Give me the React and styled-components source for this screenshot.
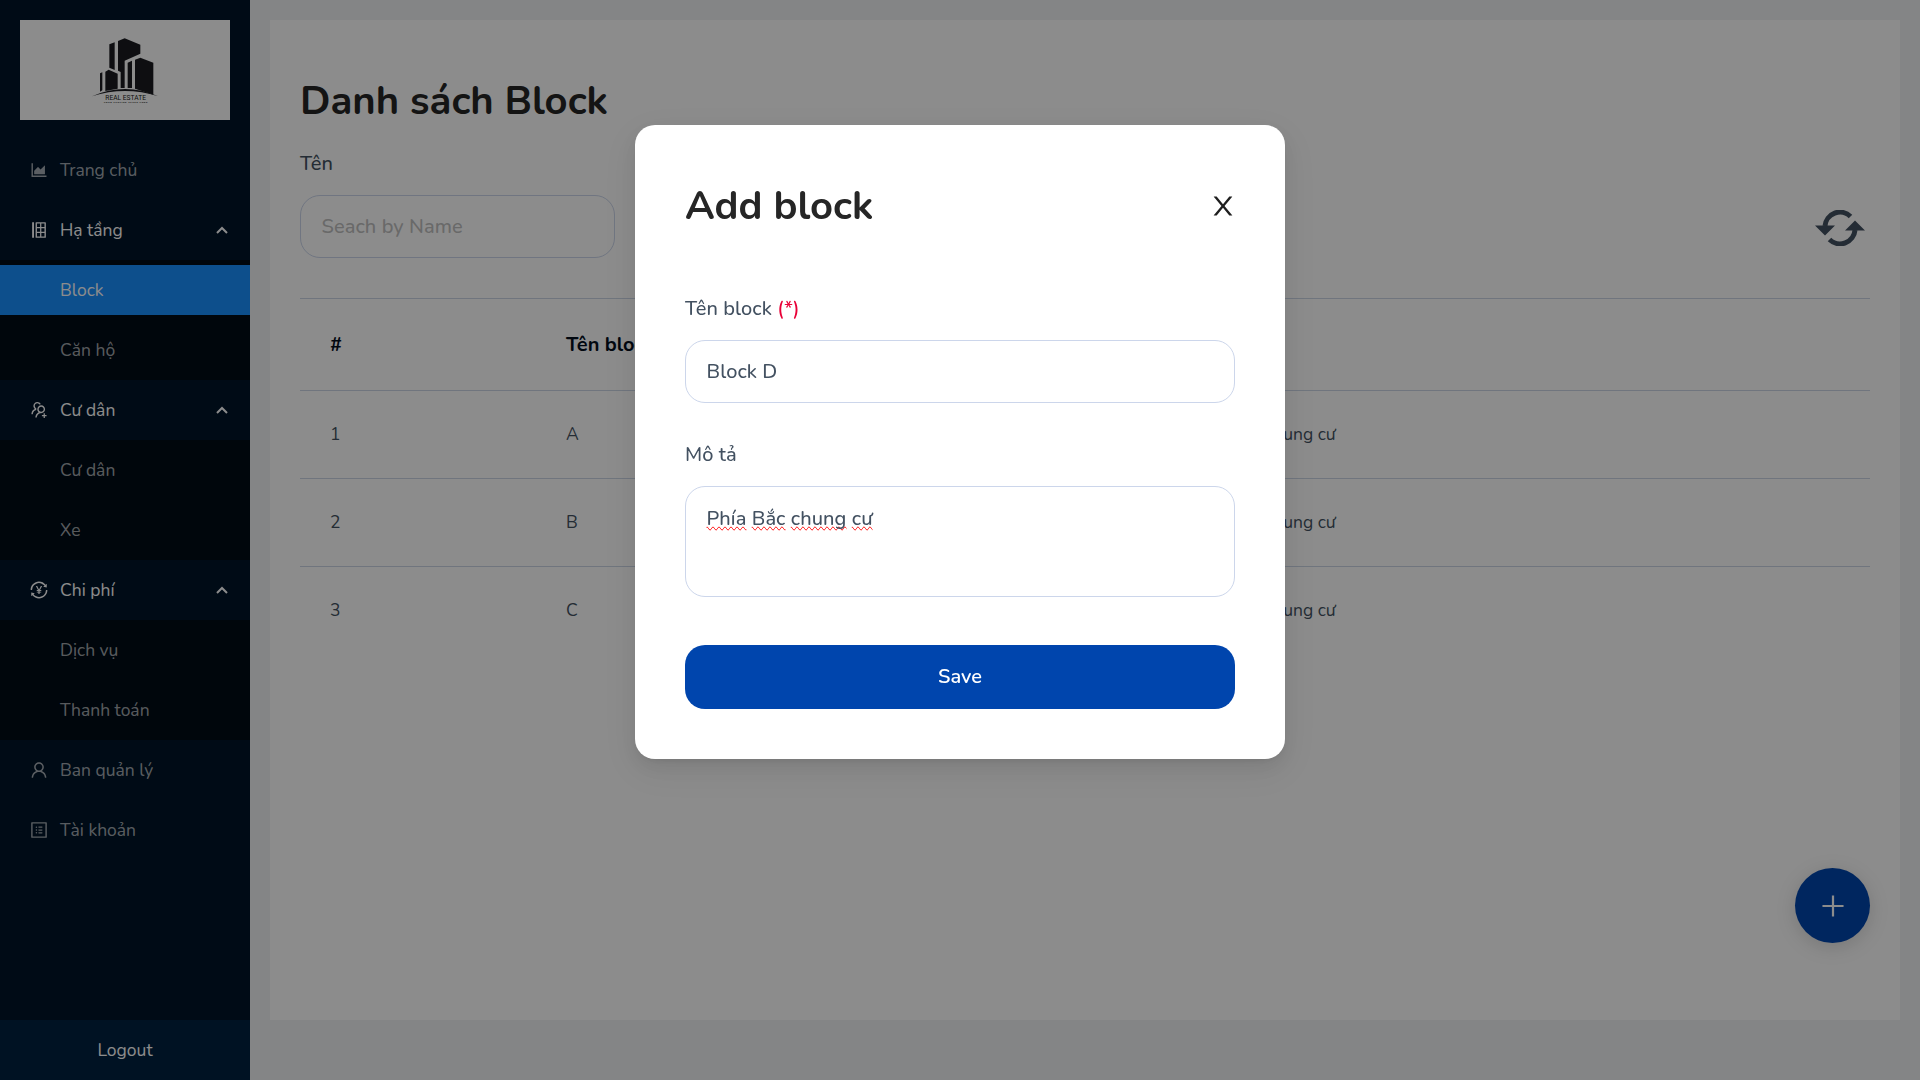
import React from 'react';
import styled, { createGlobalStyle } from 'styled-components';
import {
  AiOutlineAreaChart,
  AiOutlineInsertRowLeft,
  AiOutlineUsergroupAdd,
  AiOutlineTransaction,
  AiOutlineUser,
  AiOutlineProfile,
  AiOutlinePlus,
} from 'react-icons/ai';

const GlobalStyle = createGlobalStyle`
  *, *::before, *::after { box-sizing: border-box; }
  html, body { margin: 0; padding: 0; height: 100%; overflow: hidden; }
  body, input, textarea, button {
    font-family: Nunito, Lato, "Open Sans", sans-serif;
  }
  body { font-size: 17.5px; line-height: 1.5; color: #435161; }
`;

const Layout = styled.div`
  display: flex;
  width: 100vw;
  height: 100vh;
  background: #f0f2f5;
`;

/* ---------- Sidebar ---------- */

const Sidebar = styled.aside`
  display: flex;
  flex-direction: column;
  width: 250px;
  flex: none;
  background: #001529;
`;

const LogoBox = styled.div`
  height: 100px;
  margin: 20px;
  background: #fff;
  display: flex;
  align-items: center;
  justify-content: center;
`;

const Menu = styled.nav`
  display: flex;
  flex-direction: column;
  flex: 1;
`;

const Submenu = styled.div`
  display: flex;
  flex-direction: column;
  background: #000c17;
`;

const MenuItem = styled.div`
  display: flex;
  align-items: center;
  height: 50px;
  margin: 5px 0;
  padding: 0 20px 0 ${(p) => (p.$nested ? 60 : 29)}px;
  font-size: 17.5px;
  white-space: nowrap;
  color: ${(p) => (p.$bright ? '#fff' : 'rgba(255, 255, 255, 0.65)')};
  background: ${(p) => (p.$active ? '#1890ff' : 'transparent')};

  > svg:first-child {
    width: 20px;
    height: 20px;
    margin-right: 11px;
    flex: none;
  }
`;

const Caret = styled.svg`
  width: 12px;
  height: 8px;
  margin-left: auto;
  margin-right: 2px;
`;

const Logout = styled.button`
  height: 60px;
  border: 0;
  background: #002140;
  color: #fff;
  font-size: 17.5px;
`;

/* ---------- Content ---------- */

const Main = styled.main`
  flex: 1;
  padding: 20px 20px 60px;
  display: flex;
`;

const Card = styled.section`
  position: relative;
  flex: 1;
  background: #fff;
  padding: 51px 30px 30px;
`;

const Title = styled.h1`
  margin: 0;
  height: 60px;
  line-height: 60px;
  font-size: 40px;
  font-weight: 700;
  color: #262626;
`;

const FilterRow = styled.div`
  display: flex;
  justify-content: space-between;
  align-items: flex-end;
  height: 127px;
`;

const Field = styled.div`
  display: flex;
  flex-direction: column;
  width: ${(p) => p.$width || '100%'};
`;

const Label = styled.label`
  height: 30px;
  line-height: 30px;
  margin-bottom: 16px;
  font-size: 20px;
  font-weight: 500;
  letter-spacing: 0.08px;
  color: #435161;
`;

const Required = styled.span`
  color: #e90037;
`;

const Input = styled.input`
  height: 63px;
  padding: 0 20.5px;
  border: 1px solid #ccd6eb;
  border-radius: 20px;
  background: transparent;
  font-size: 20px;
  font-weight: 500;
  letter-spacing: 0.08px;
  color: #435161;
  outline: none;
  &::placeholder { color: #bfbfbf; opacity: 1; }
`;

const RefreshIcon = styled.svg`
  width: 50px;
  height: 36px;
  margin: 0 5px 12px 0;
`;

const Table = styled.div`
  margin-top: 40px;
`;

const Row = styled.div`
  display: grid;
  grid-template-columns: 236px 627px 1fr;
  align-items: center;
  height: ${(p) => (p.$head ? 92 : 88)}px;
  border-top: 1px solid #ccd6e6;
  padding-left: 30px;
  font-size: ${(p) => (p.$head ? 20 : 17.5)}px;
  font-weight: ${(p) => (p.$head ? 700 : 400)};
  color: ${(p) => (p.$head ? '#030d1c' : '#435161')};
`;

const AddButton = styled.button`
  position: absolute;
  right: 30px;
  bottom: 77px;
  width: 75px;
  height: 75px;
  display: flex;
  align-items: center;
  justify-content: center;
  padding: 0;
  border: 0;
  border-radius: 50%;
  background: #0045ad;
  color: #fff;
  box-shadow: 0 4px 20px rgba(0, 0, 0, 0.15);
  svg { width: 30px; height: 30px; }
`;

/* ---------- Modal ---------- */

const Mask = styled.div`
  position: fixed;
  inset: 0;
  display: flex;
  justify-content: center;
  align-items: flex-start;
  padding-top: 125px;
  background: rgba(0, 0, 0, 0.45);
`;

const Dialog = styled.div`
  display: flex;
  flex-direction: column;
  width: 650px;
  height: 634px;
  padding: 51px 50px 50px;
  border-radius: 20px;
  background: #fff;
  box-shadow: 0 4px 8px -5px rgba(0, 0, 0, 0.12), 0 8px 20px rgba(0, 0, 0, 0.08),
    0 11px 35px 10px rgba(0, 0, 0, 0.05);
`;

const DialogHeader = styled.header`
  display: flex;
  justify-content: space-between;
  align-items: center;
  height: 60px;
  margin-bottom: 58px;
`;

const CloseIcon = styled.svg`
  width: 30px;
  height: 30px;
  margin-right: -2.5px;
  color: #1f1f1f;
`;

const Form = styled.form`
  display: flex;
  flex-direction: column;
  gap: 37px;
`;

const TextBox = styled.div`
  height: 111px;
  padding: 17px 20.5px;
  border: 1px solid #ccd6eb;
  border-radius: 20px;
  line-height: 30px;
  font-size: 20px;
  font-weight: 500;
  letter-spacing: 0.08px;
  color: #435161;
`;

const Misspelled = styled.span`
  text-decoration: spelling-error;
`;

const SaveButton = styled.button`
  height: 64px;
  margin-top: 11px;
  padding-bottom: 3px;
  border: 0;
  border-radius: 20px;
  background: #0045ad;
  color: #fff;
  font-size: 20px;
  font-weight: 600;
`;

const Logo = () => (
  <svg width="90" height="80" viewBox="0 0 270 240" fill="#1a1b20">
    <path d="M88 43l16-6v83l-16-7z" />
    <path d="M114 33l20-8 47 19v27l-47 21v82h-12v-48l-8-4z" />
    <path d="M143 98l13-6v82h-13z" />
    <path d="M165 89l16-6 39 15v96l-55-18z" />
    <path d="M60 130l7-3v54l-7 4zM76 125l10-6 27 12v45l-37 7z" />
    <path d="M36 199Q85 177 135 177t100 22Q185 183 135 183T36 199z" />
    <text
      x="76"
      y="210"
      fontFamily="Roboto, sans-serif"
      fontSize="21"
      textLength="122"
      lengthAdjust="spacingAndGlyphs"
    >
      REAL ESTATE
    </text>
    <text
      x="71"
      y="220"
      fontFamily="Roboto, sans-serif"
      fontSize="7.500"
      fontWeight="700"
      textLength="131"
    >
      YOUR TAGLINE SPACE HERE
    </text>
  </svg>
);

const CaretUp = () => (
  <Caret viewBox="0 0 12 8">
    <path d="M1 7l5-5 5 5" fill="none" stroke="currentColor" strokeWidth="2" />
  </Caret>
);

const menu = [
  { label: 'Trang chủ', icon: AiOutlineAreaChart },
  { label: 'Hạ tầng', icon: AiOutlineInsertRowLeft, children: ['Block', 'Căn hộ'] },
  { label: 'Cư dân', icon: AiOutlineUsergroupAdd, children: ['Cư dân', 'Xe'] },
  { label: 'Chi phí', icon: AiOutlineTransaction, children: ['Dịch vụ', 'Thanh toán'] },
  { label: 'Ban quản lý', icon: AiOutlineUser },
  { label: 'Tài khoản', icon: AiOutlineProfile },
];

const blocks = [
  { id: 1, name: 'A', note: 'Phía Tây chung cư' },
  { id: 2, name: 'B', note: 'Phía Tây chung cư' },
  { id: 3, name: 'C', note: 'Phía Tây chung cư' },
];

export default function App() {
  return (
    <>
      <GlobalStyle />
      <Layout>
        <Sidebar>
          <LogoBox>
            <Logo />
          </LogoBox>
          <Menu>
            {menu.map(({ label, icon: Icon, children }) => (
              <React.Fragment key={label}>
                <MenuItem $bright={!!children}>
                  <Icon />
                  {label}
                  {children && <CaretUp />}
                </MenuItem>
                {children && (
                  <Submenu>
                    {children.map((name) => (
                      <MenuItem key={name} $nested $active={name === 'Block'} $bright={name === 'Block'}>
                        {name}
                      </MenuItem>
                    ))}
                  </Submenu>
                )}
              </React.Fragment>
            ))}
          </Menu>
          <Logout>Logout</Logout>
        </Sidebar>
        <Main>
          <Card>
            <Title>Danh sách Block</Title>
            <FilterRow>
              <Field $width="315px">
                <Label>Tên</Label>
                <Input placeholder="Seach by Name" />
              </Field>
              <RefreshIcon viewBox="0 0 50 36">
                <g fill="none" stroke="#435161" strokeWidth="5">
                  <path d="M10 16A15 15 0 0 1 35.500 6.500" />
                  <path d="M40 20A15 15 0 0 1 14.500 29.500" />
                </g>
                <path fill="#435161" d="M0 15.500h20L10 25.500zM30 20.500h20L40 10.500z" />
              </RefreshIcon>
            </FilterRow>
            <Table>
              <Row $head>
                <span>#</span>
                <span>Tên block</span>
                <span>Mô tả</span>
              </Row>
              {blocks.map((b) => (
                <Row key={b.id}>
                  <span>{b.id}</span>
                  <span>{b.name}</span>
                  <span>{b.note}</span>
                </Row>
              ))}
            </Table>
            <AddButton>
              <AiOutlinePlus />
            </AddButton>
          </Card>
        </Main>
      </Layout>
      <Mask>
        <Dialog>
          <DialogHeader>
            <Title as="h2">Add block</Title>
            <CloseIcon viewBox="0 0 1024 1024" fill="currentColor">
              <path d="M563.8 512l262.5-312.9c4.4-5.2.7-13.1-6.1-13.1h-79.8c-4.7 0-9.2 2.1-12.3 5.7L511.6 449.8 295.1 191.7c-3-3.6-7.5-5.7-12.3-5.7H203c-6.8 0-10.5 7.9-6.1 13.1L459.4 512 196.9 824.9A7.95 7.95 0 0 0 203 838h79.800c4.700 0 9.200-2.100 12.300-5.700l216.500-258.100 216.500 258.100c3 3.600 7.500 5.700 12.300 5.700h79.800c6.800 0 10.500-7.900 6.100-13.100L563.800 512z" />
            </CloseIcon>
          </DialogHeader>
          <Form>
            <Field>
              <Label>
                Tên block <Required>(*)</Required>
              </Label>
              <Input defaultValue="Block D" />
            </Field>
            <Field>
              <Label>Mô tả</Label>
              <TextBox>
                {['Phía', 'Bắc', 'chung', 'cư'].map((word, i) => (
                  <React.Fragment key={word}>
                    {i > 0 && ' '}
                    <Misspelled>{word}</Misspelled>
                  </React.Fragment>
                ))}
              </TextBox>
            </Field>
            <SaveButton type="button">Save</SaveButton>
          </Form>
        </Dialog>
      </Mask>
    </>
  );
}
